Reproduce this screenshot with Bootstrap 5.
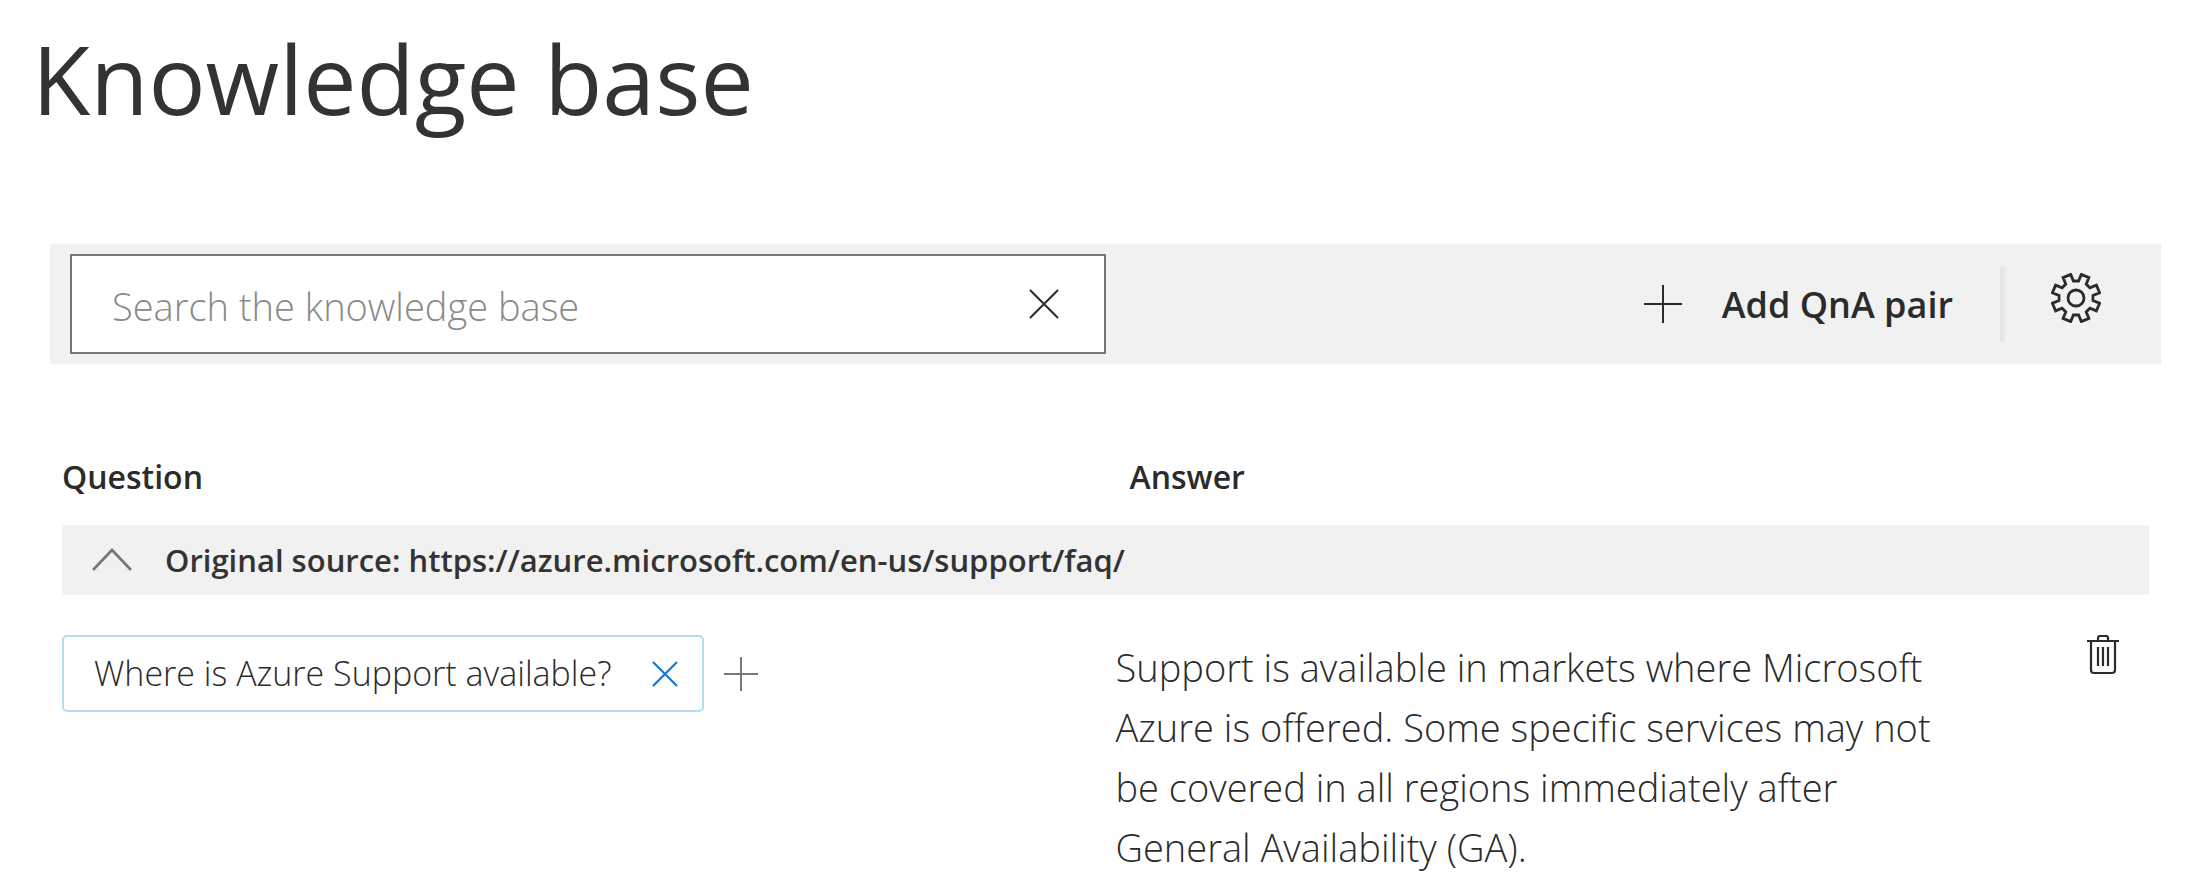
<!DOCTYPE html>
<html lang="en">
<head>
<meta charset="utf-8">
<meta name="viewport" content="width=device-width, initial-scale=1">
<title>Knowledge base</title>
<link href="https://cdn.jsdelivr.net/npm/bootstrap@5.3.0/dist/css/bootstrap.min.css" rel="stylesheet">
<style>
  body { font-family: "Open Sans", "Noto Sans", sans-serif; color: #2b2b2b; background: #fff; }
  svg { display: block; fill: none; stroke: currentColor; }
  .icon-btn { padding: 0; border: 0; background: none; color: inherit; line-height: 0; }
  .page-title { margin: 0; padding: 10px 32px 0; font-size: 95px; line-height: 136px; font-weight: 400; color: #333; }
  .toolbar { margin: 98px 33px 0 50px; padding: 10px 20px; min-height: 120px; background: #f1f1f1; }
  .search-box { width: 50%; height: 100px; padding: 0 45px 0 40px; border: 2px solid #767676; background: #fff; }
  .search-box .form-control { height: 96px; padding: 4px 0 0; border: 0; box-shadow: none; background: none; font-size: 38px; font-weight: 350; color: #2b2b2b; }
  .search-box .form-control::placeholder { color: #8a8a8a; opacity: 1; }
  .add-btn { gap: 40px; font-size: 36px; font-weight: 600; line-height: 48px; }
  .add-btn span { padding-top: 2px; }
  .divider { width: 5px; height: 75px; margin: 0 46px 0 47px; background: #e6e6e6; }
  .gear-btn { margin: 0 40px 12px 0; }
  .qna { margin: 89px 45px 0 62px; }
  .qna table { table-layout: fixed; width: 100%; }
  .qna th, .qna td { padding: 0; }
  .col-question { width: 50%; }
  .col-actions { width: 160px; }
  .qna thead th { padding-bottom: 24px; font-size: 32px; line-height: 48px; font-weight: 600; }
  .qna thead th + th { padding-left: 24px; }
  .source-row { height: 70px; padding: 0 30px; gap: 33px; background: #f1f1f1; font-size: 31px; font-weight: 600; color: #333; }
  .source-row .icon-btn { color: #767676; }
  .qna .data-row td { padding-top: 40px; vertical-align: top; }
  .chip { height: 77px; padding: 0 24px 0 30px; gap: 40px; border: 2px solid #b3dcf4; border-radius: 5px; font-size: 34px; font-weight: 350; }
  .chip .icon-btn { color: #0f78d4; }
  .alt-btn { margin-left: 20px; color: #777; }
  .qna .data-row .answer { padding: 42px 16px 0 10px; font-size: 38px; font-weight: 350; line-height: 60px; }
  .trash-btn { margin-right: 30px; }
</style>
</head>
<body>
<main>
  <h1 class="page-title">Knowledge base</h1>

  <div class="toolbar d-flex align-items-center">
    <div class="search-box d-flex align-items-center">
      <input type="text" class="form-control flex-fill" placeholder="Search the knowledge base" aria-label="Search the knowledge base">
      <button type="button" class="icon-btn" aria-label="Clear search">
        <svg width="30" height="30" viewBox="0 0 30 30" stroke-width="2"><path d="M1 1l28 28M29 1L1 29"/></svg>
      </button>
    </div>
    <div class="d-flex align-items-center ms-auto">
      <button type="button" class="icon-btn add-btn d-flex align-items-center">
        <svg width="38" height="38" viewBox="0 0 38 38" stroke-width="2"><path d="M19 0v38M0 19h38"/></svg>
        <span>Add QnA pair</span>
      </button>
      <div class="divider"></div>
      <button type="button" class="icon-btn gear-btn" aria-label="Settings">
        <svg width="50" height="50" viewBox="-25 -25 50 50" stroke-width="2.8">
          <circle r="8"/>
          <path d="M-5.3 -23.6L-2.6 -17H2.6L5.3 -23.6L12.9 -20.4L10.2 -13.9L13.9 -10.2L20.4 -12.9L23.6 -5.3L17 -2.6V2.6L23.6 5.3L20.4 12.9L13.9 10.2L10.2 13.9L12.9 20.4L5.3 23.6L2.6 17H-2.6L-5.3 23.6L-12.9 20.4L-10.2 13.9L-13.9 10.2L-20.4 12.9L-23.6 5.3L-17 2.6V-2.6L-23.6 -5.3L-20.4 -12.9L-13.9 -10.2L-10.2 -13.9L-12.9 -20.4Z"/>
        </svg>
      </button>
    </div>
  </div>

  <div class="qna">
    <table>
      <colgroup><col class="col-question"><col><col class="col-actions"></colgroup>
      <thead>
        <tr><th scope="col">Question</th><th scope="col" colspan="2">Answer</th></tr>
      </thead>
      <tbody>
        <tr>
          <td colspan="3">
            <div class="source-row d-flex align-items-center">
              <button type="button" class="icon-btn" aria-label="Collapse source">
                <svg width="40" height="24" viewBox="0 0 40 24" stroke-width="2.6"><path d="M1 22L20 2l19 20"/></svg>
              </button>
              <span>Original source: https://azure.microsoft.com/en-us/support/faq/</span>
            </div>
          </td>
        </tr>
        <tr class="data-row">
          <td>
            <div class="d-flex align-items-center">
              <div class="chip d-flex align-items-center">
                <span>Where is Azure Support available?</span>
                <button type="button" class="icon-btn" aria-label="Remove question">
                  <svg width="26" height="26" viewBox="0 0 26 26" stroke-width="2.2"><path d="M1 1l24 24M25 1L1 25"/></svg>
                </button>
              </div>
              <button type="button" class="icon-btn alt-btn" aria-label="Add alternative phrasing">
                <svg width="34" height="34" viewBox="0 0 34 34" stroke-width="2"><path d="M17 0v34M0 17h34"/></svg>
              </button>
            </div>
          </td>
          <td class="answer">Support is available in markets where Microsoft Azure is offered. Some specific services may not be covered in all regions immediately after General Availability (GA).</td>
          <td>
            <div class="d-flex justify-content-end">
              <button type="button" class="icon-btn trash-btn" aria-label="Delete pair">
                <svg width="32" height="40" viewBox="0 0 32 40" stroke-width="2.2"><path d="M0 6h32M11 6V3q0-2 2-2h6q2 0 2 2v3M4 6v29q0 3 3 3h18q3 0 3-3V6M11 12v19M16 12v19M21 12v19"/></svg>
              </button>
            </div>
          </td>
        </tr>
      </tbody>
    </table>
  </div>
</main>
<script src="https://cdn.jsdelivr.net/npm/bootstrap@5.3.0/dist/js/bootstrap.bundle.min.js"></script>
</body>
</html>
